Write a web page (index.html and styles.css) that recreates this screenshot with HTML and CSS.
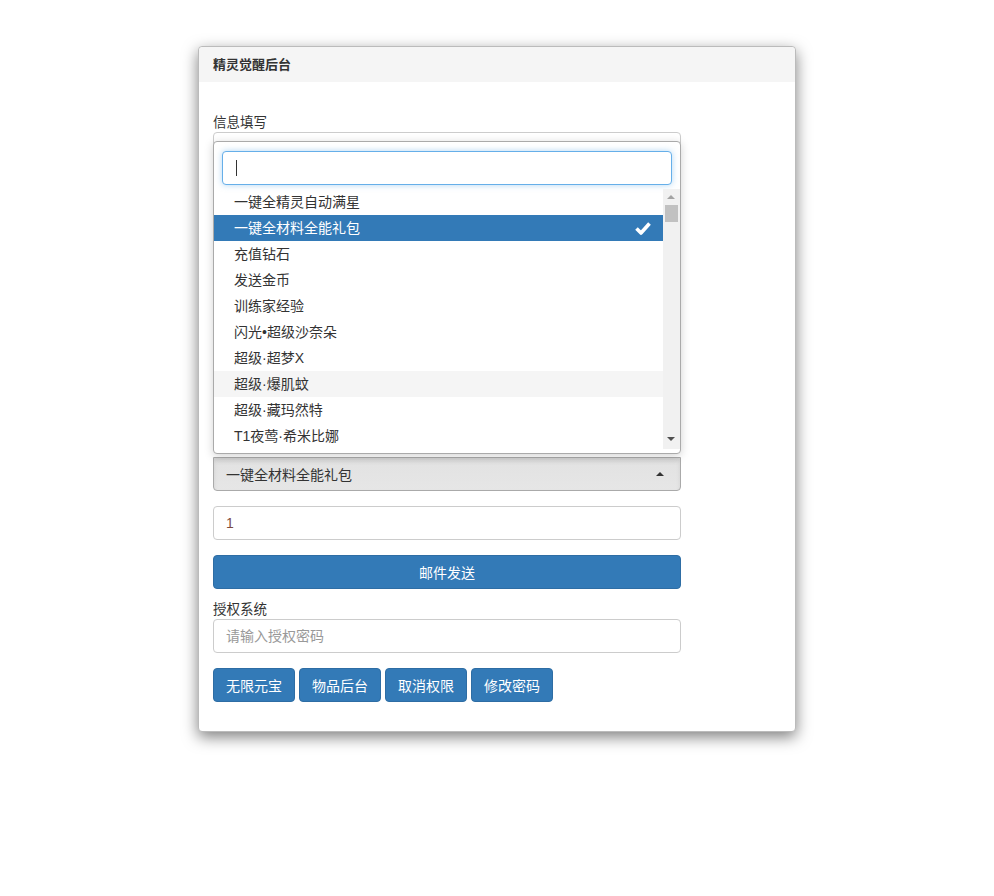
FILE: index.html
```html
<!DOCTYPE html>
<html lang="zh-CN">
<head>
    <meta charset="UTF-8">
    <meta name="viewport" content="width=device-width, initial-scale=1.0">
    <title>精灵觉醒后台</title>
    <link rel="stylesheet" href="styles.css">
</head>
<body>
<div class="panel">
    <div class="panel-heading">精灵觉醒后台</div>
    <div class="panel-body">
        <form class="main-form" onsubmit="return false">
            <label class="field-label">信息填写</label>
            <input type="text" class="form-control">
            <input type="text" class="form-control gap">
            <input type="text" class="form-control gap">
            <button class="btn btn-warning gap">查询角色</button>
            <button class="btn btn-default gap-sm">充值</button>
            <button class="btn btn-default gap">发送物品</button>
            <button class="btn btn-danger gap">封号</button>

            <!-- item picker (select2 style, opened upward) -->
            <div class="picker gap-lg">
                <div class="picker-dropdown">
                    <div class="picker-search">
                        <input type="text" class="search-field">
                        <span class="cursor"></span>
                    </div>
                    <div class="picker-results">
                        <ul class="result-list">
                            <li>一键全精灵自动满星</li>
                            <li class="selected">一键全材料全能礼包
                                <svg class="check" viewBox="0 0 16 14" width="16" height="14">
                                    <path d="M1.5 7.5 L6 12 L14.5 2.5" fill="none" stroke="#fff" stroke-width="3.6" stroke-linejoin="round"/>
                                </svg>
                            </li>
                            <li>充值钻石</li>
                            <li>发送金币</li>
                            <li>训练家经验</li>
                            <li>闪光•超级沙奈朵</li>
                            <li>超级·超梦X</li>
                            <li class="hover">超级·爆肌蚊</li>
                            <li>超级·藏玛然特</li>
                            <li>T1夜莺·希米比娜</li>
                        </ul>
                        <div class="scrollbar">
                            <span class="arrow-up"></span>
                            <span class="thumb"></span>
                            <span class="arrow-down"></span>
                        </div>
                    </div>
                </div>
                <div class="picker-value">
                    <span>一键全材料全能礼包</span>
                    <span class="caret-up"></span>
                </div>
            </div>

            <input type="text" class="form-control count gap-send" value="1">
            <button class="btn btn-primary btn-block gap-send">邮件发送</button>

            <label class="field-label label-auth">授权系统</label>
            <input type="password" class="form-control" placeholder="请输入授权密码">
            <div class="btn-row">
                <button class="btn btn-primary">无限元宝</button>
                <button class="btn btn-primary">物品后台</button>
                <button class="btn btn-primary">取消权限</button>
                <button class="btn btn-primary">修改密码</button>
            </div>
        </form>
    </div>
</div>
</body>
</html>
```

FILE: styles.css
```css
body {
    margin: 0;
    min-height: 100vh;
    font-family: "Liberation Sans", "Noto Sans CJK SC", sans-serif;
    font-size: 14px;
    color: #333;
    background: #fff;
}

.panel {
    width: 596px;
    margin: 46px auto 0;
    border: 1px solid #bbb;
    border-radius: 4px;
    background: #fff;
    box-shadow: 0 5px 15px rgba(0, 0, 0, 0.5);
}

.panel-heading {
    height: 35px;
    line-height: 35px;
    padding: 0 14px;
    background: #f5f5f5;
    border-radius: 4px 4px 0 0;
    font-size: 13px;
    font-weight: bold;
}

.panel-body {
    padding: 32px 14px 29px;
}

.main-form {
    width: 468px;
    display: flex;
    flex-direction: column;
}

.field-label {
    display: block;
    line-height: 18px;
    font-size: 13.5px;
}

.label-auth {
    margin-top: 12px;
}

.form-control {
    box-sizing: border-box;
    height: 34px;
    padding: 6px 12px;
    font: inherit;
    color: #555;
    border: 1px solid #ccc;
    border-radius: 4px;
    outline: none;
}

.form-control::placeholder {
    color: #999;
}

.count {
    color: #7d4b3e;
}

.gap {
    margin-top: 14px;
}

.gap-sm {
    margin-top: 4px;
}

.gap-send {
    margin-top: 15px;
}

.gap-lg {
    margin-top: 13px;
}

.btn {
    box-sizing: border-box;
    height: 34px;
    padding: 0 12px;
    font: inherit;
    border: 1px solid transparent;
    border-radius: 4px;
    cursor: pointer;
}

.btn-default {
    background: #fff;
    border-color: #ccc;
}

.btn-warning {
    background: #f0ad4e;
    border-color: #eea236;
    color: #fff;
}

.btn-danger {
    background: #d9534f;
    border-color: #d43f3a;
    color: #fff;
}

.btn-primary {
    background: #337ab7;
    border-color: #2e6da4;
    color: #fff;
}

.btn-block {
    width: 100%;
}

.btn-row {
    display: flex;
    gap: 4px;
    margin-top: 15px;
}

.btn-row .btn {
    width: 82px;
    padding: 0;
}

/* picker */
.picker {
    position: relative;
}

.picker-value {
    box-sizing: border-box;
    height: 34px;
    display: flex;
    align-items: center;
    justify-content: space-between;
    padding: 0 12px;
    border: 1px solid #aaa;
    border-radius: 0 0 4px 4px;
    background: linear-gradient(#e2e2e2, #e6e6e6);
    box-shadow: inset 0 3px 4px rgba(0, 0, 0, 0.08);
}

.caret-up {
    width: 0;
    height: 0;
    margin-right: 4px;
    border-left: 4px solid transparent;
    border-right: 4px solid transparent;
    border-bottom: 4px solid #333;
}

.picker-dropdown {
    position: absolute;
    left: 0;
    right: 0;
    bottom: calc(100% + 3px);
    z-index: 10;
    box-sizing: border-box;
    padding: 9px 0 4px;
    background: #fff;
    border: 1px solid #aaa;
    border-radius: 4px;
    box-shadow: 0 2px 10px rgba(0, 0, 0, 0.18);
}

.picker-search {
    position: relative;
    padding: 0 8px 4px 8px;
}

.search-field {
    box-sizing: border-box;
    width: 100%;
    height: 34px;
    padding: 0 12px;
    font: inherit;
    border: 1px solid #66afe9;
    border-radius: 4px;
    outline: none;
    box-shadow: 0 0 6px rgba(102, 175, 233, 0.5);
}

.cursor {
    position: absolute;
    left: 22px;
    top: 9px;
    width: 1px;
    height: 16px;
    background: #333;
}

.picker-results {
    display: flex;
    height: 260px;
}

.result-list {
    flex: 1;
    list-style: none;
    margin: 0;
    padding: 0;
}

.result-list li {
    height: 26px;
    line-height: 26px;
    padding: 0 14px 0 20px;
    display: flex;
    align-items: center;
    justify-content: space-between;
}

.result-list li.selected {
    background: #337ab7;
    color: #fff;
}

.result-list li.hover {
    background: #f5f5f5;
}

.check {
    margin-right: -2px;
}

.scrollbar {
    width: 17px;
    background: #f1f1f1;
    position: relative;
}

.thumb {
    position: absolute;
    left: 2px;
    right: 2px;
    top: 16px;
    height: 17px;
    background: #c1c1c1;
}

.arrow-up,
.arrow-down {
    position: absolute;
    left: 4px;
    width: 0;
    height: 0;
    border-left: 4px solid transparent;
    border-right: 4px solid transparent;
}

.arrow-up {
    top: 6px;
    border-bottom: 4px solid #a3a3a3;
}

.arrow-down {
    bottom: 8px;
    border-top: 4px solid #505050;
}
```
